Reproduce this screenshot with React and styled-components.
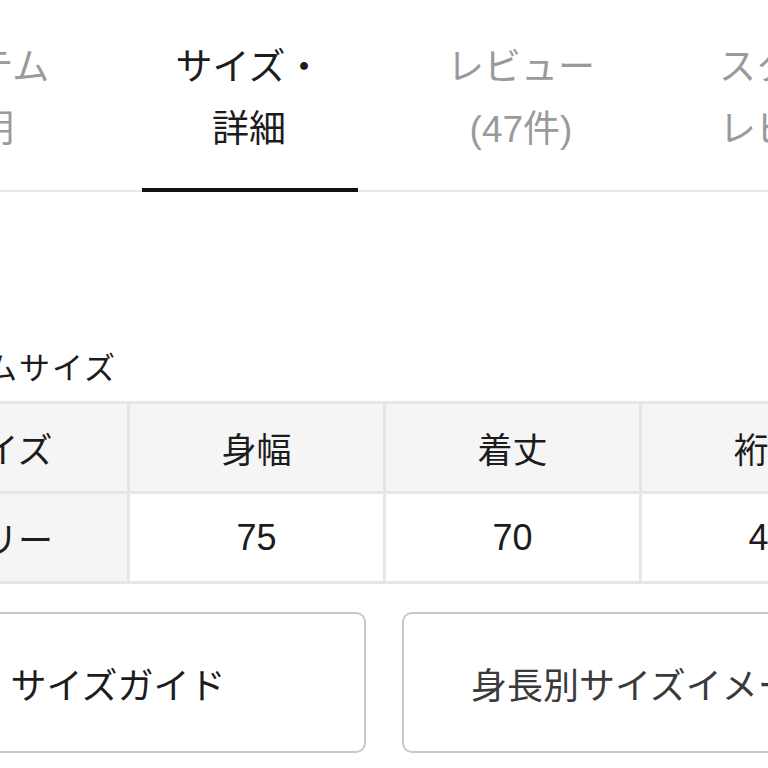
import React from 'react';
import styled, { createGlobalStyle } from 'styled-components';

const tabs = [
  { id: 'item', label: ['アイテム', '説明'] },
  { id: 'size', label: ['サイズ・', '詳細'], active: true },
  { id: 'review', label: ['レビュー', '(47件)'] },
  { id: 'staff', label: ['スタッフ', 'レビュー'] }
];

const columns = ['サイズ', '身幅', '着丈', '裄丈'];
const rows = [{ size: 'フリー', values: ['75', '70', '45'] }];

export default function App() {
  return (
    <Page>
      <GlobalStyle />
      <TabBar>
        {tabs.map(tab => (
          <Tab key={tab.id} active={tab.active}>
            {tab.label.map(line => (
              <TabLine key={line}>{line}</TabLine>
            ))}
          </Tab>
        ))}
      </TabBar>
      <Section>
        <Heading>アイテムサイズ</Heading>
        <SizeTable>
          <thead>
            <tr>
              {columns.map(col => (
                <HeadCell key={col}>{col}</HeadCell>
              ))}
            </tr>
          </thead>
          <tbody>
            {rows.map(row => (
              <tr key={row.size}>
                <HeadCell as="th">{row.size}</HeadCell>
                {row.values.map((v, i) => (
                  <Cell key={i}>{v}</Cell>
                ))}
              </tr>
            ))}
          </tbody>
        </SizeTable>
        <Buttons>
          <GuideButton>サイズガイド</GuideButton>
          <GuideButton muted>身長別サイズイメージ</GuideButton>
        </Buttons>
      </Section>
    </Page>
  );
}

const GlobalStyle = createGlobalStyle`
  html, body {
    margin: 0;
    padding: 0;
    background: #fff;
  }
  body {
    font-family: "Liberation Sans", "Noto Sans CJK JP", sans-serif;
    color: #1c1c1c;
  }
`;

const Page = styled.div`
  width: 768px;
  height: 768px;
  overflow: hidden;
  background: #fff;
`;

const TabBar = styled.div`
  display: flex;
  margin-left: -159px;
  width: 1100px;
  border-bottom: 2px solid #e8e8e8;
`;

const Tab = styled.div`
  position: relative;
  flex: 0 0 272px;
  box-sizing: border-box;
  height: 190px;
  padding-top: 37px;
  text-align: center;
  font-size: 37px;
  line-height: 62px;
  color: ${p => (p.active ? '#1c1c1c' : '#9a9a9a')};

  &::after {
    content: '';
    display: ${p => (p.active ? 'block' : 'none')};
    position: absolute;
    left: 29px;
    right: 27px;
    bottom: -2px;
    height: 4px;
    background: #111;
  }
`;

const TabLine = styled.div`
  white-space: nowrap;
`;

const Section = styled.div`
  margin-left: -130px;
  width: 1030px;
  padding-top: 157px;
`;

const Heading = styled.h2`
  margin: 0 0 12px 20px;
  font-size: 31px;
  font-weight: normal;
  line-height: 40px;
  letter-spacing: 2px;
`;

const SizeTable = styled.table`
  border-collapse: collapse;
  table-layout: fixed;
  width: 1024px;
  margin-left: 1px;
`;

const HeadCell = styled.th`
  width: 256px;
  height: 90px;
  box-sizing: border-box;
  border: 3px solid #e6e6e6;
  background: #f5f5f5;
  font-size: 35px;
  font-weight: normal;
  text-align: center;
  padding: 0;
`;

const Cell = styled.td`
  height: 86px;
  box-sizing: border-box;
  border: 3px solid #e6e6e6;
  background: #fff;
  font-size: 36px;
  text-align: center;
  padding: 0;
`;

const Buttons = styled.div`
  display: flex;
  gap: 36px;
  margin-top: 28px;
`;

const GuideButton = styled.button`
  flex: 0 0 496px;
  height: 141px;
  box-sizing: border-box;
  border: 2px solid #c8c8c8;
  border-radius: 10px;
  background: #fff;
  font-family: inherit;
  font-size: 36px;
  color: ${p => (p.muted ? '#3a3a3a' : '#1c1c1c')};
  white-space: nowrap;
  overflow: hidden;
`;
